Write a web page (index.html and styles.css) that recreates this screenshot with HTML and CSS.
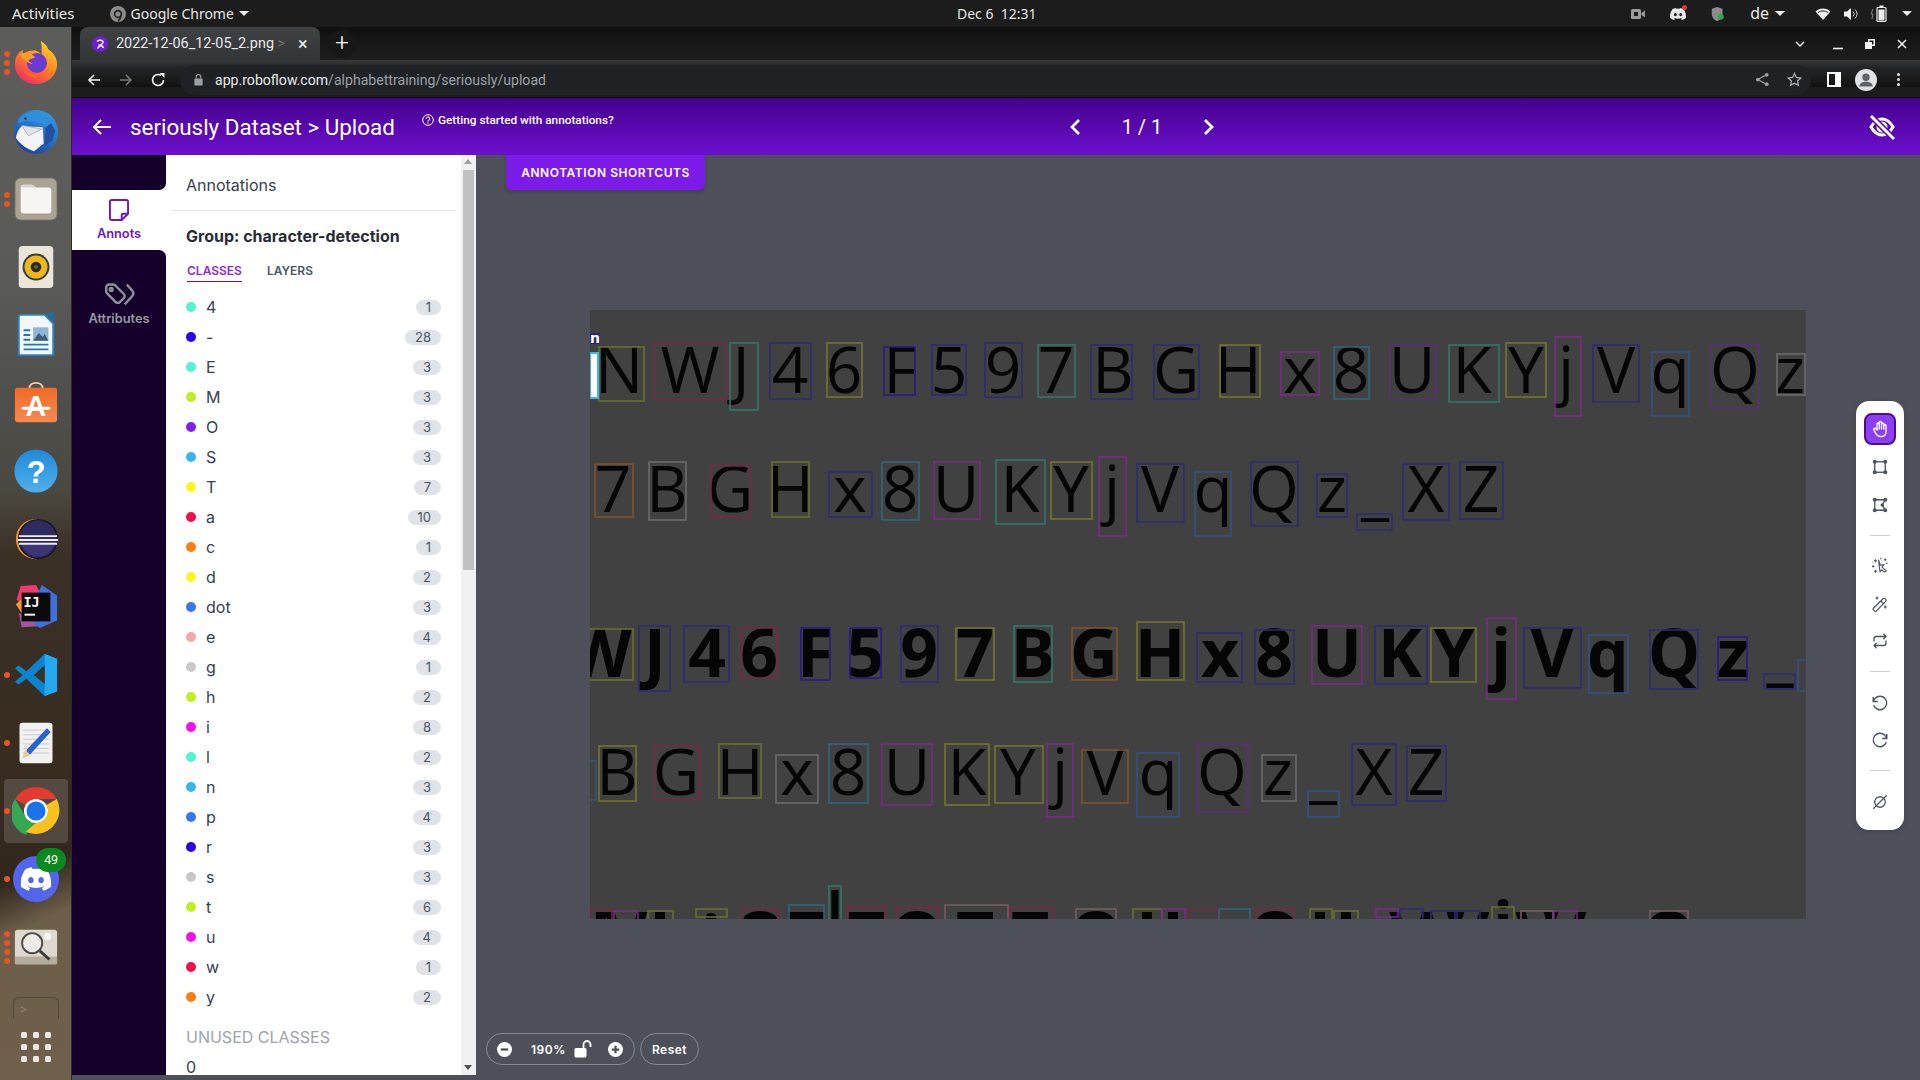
FILE: index.html
```html
<!DOCTYPE html>
<html lang="en">
<head>
<meta charset="utf-8">
<title>seriously Dataset - Upload</title>
<link rel="stylesheet" href="styles.css">
</head>
<body>
<svg class="defs" width="0" height="0" aria-hidden="true">
  <defs>
    <symbol id="discord" viewBox="0 0 24 24"><path d="M20.317 4.37a19.791 19.791 0 0 0-4.885-1.515.074.074 0 0 0-.079.037c-.21.375-.444.864-.608 1.25a18.27 18.27 0 0 0-5.487 0 12.64 12.64 0 0 0-.617-1.25.077.077 0 0 0-.079-.037A19.736 19.736 0 0 0 3.677 4.37a.07.07 0 0 0-.032.027C.533 9.046-.32 13.58.099 18.057a.082.082 0 0 0 .031.057 19.9 19.9 0 0 0 5.993 3.03.078.078 0 0 0 .084-.028c.462-.63.874-1.295 1.226-1.994a.076.076 0 0 0-.041-.106 13.107 13.107 0 0 1-1.872-.892.077.077 0 0 1-.008-.128 10.2 10.2 0 0 0 .372-.292.074.074 0 0 1 .077-.01c3.928 1.793 8.18 1.793 12.062 0a.074.074 0 0 1 .078.01c.12.098.246.198.373.292a.077.077 0 0 1-.006.127 12.299 12.299 0 0 1-1.873.892.077.077 0 0 0-.041.107c.36.698.772 1.362 1.225 1.993a.076.076 0 0 0 .084.028 19.839 19.839 0 0 0 6.002-3.03.077.077 0 0 0 .032-.054c.5-5.177-.838-9.674-3.549-13.66a.061.061 0 0 0-.031-.03zM8.02 15.33c-1.183 0-2.157-1.085-2.157-2.419 0-1.333.956-2.419 2.157-2.419 1.21 0 2.176 1.096 2.157 2.42 0 1.333-.956 2.418-2.157 2.418zm7.975 0c-1.183 0-2.157-1.085-2.157-2.419 0-1.333.955-2.419 2.157-2.419 1.21 0 2.176 1.096 2.157 2.42 0 1.333-.946 2.418-2.157 2.418z"/></symbol>
    <linearGradient id="ffg" x1="0.8" y1="0" x2="0.2" y2="1"><stop offset="0" stop-color="#ffd52e"/><stop offset="0.45" stop-color="#ff8a1e"/><stop offset="1" stop-color="#f0256e"/></linearGradient>
    <linearGradient id="tbg" x1="0.8" y1="0" x2="0.2" y2="1"><stop offset="0" stop-color="#2fa0ea"/><stop offset="1" stop-color="#1e3e9c"/></linearGradient>
    <linearGradient id="swg" x1="0" y1="0" x2="0" y2="1"><stop offset="0" stop-color="#f26a26"/><stop offset="1" stop-color="#f58a50"/></linearGradient>
    <linearGradient id="hlg" x1="0" y1="0" x2="0" y2="1"><stop offset="0" stop-color="#2089da"/><stop offset="1" stop-color="#4fb0ea"/></linearGradient>
  </defs>
</svg>

<header class="gnome-bar">
  <span class="gnome-activities">Activities</span>
  <span class="gnome-app">
    <svg class="gnome-app-icon" viewBox="0 0 16 16"><circle cx="8" cy="8" r="8" fill="#8b8b8b"/><circle cx="8" cy="8" r="3.4" fill="none" stroke="#222" stroke-width="1.6"/><path d="M11 9c0 3-1 4.5-3 6" fill="none" stroke="#222" stroke-width="1.6"/></svg>
    Google Chrome<i class="caret caret-app"></i>
  </span>
  <span class="gnome-clock">Dec 6&nbsp;&nbsp;12:31</span>
  <span class="gnome-tray">
    <svg class="tray tray-cam" viewBox="0 0 16 16"><rect x="1" y="3" width="10" height="10" rx="1.5" fill="#9a9a9a"/><rect x="4" y="6" width="4" height="4" fill="#1c1c1c"/><path d="M11.5 7l3.5-2.5v7L11.5 9z" fill="#9a9a9a"/></svg>
    <span class="tray-discord"><svg class="tray" viewBox="0 0 24 24" fill="#e8e8e8"><use href="#discord"/></svg><i class="tray-red"></i></span>
    <svg class="tray tray-shield" viewBox="0 0 16 18"><path d="M7 1l6 2v6c0 4-3 7-6 8-3-1-6-4-6-8V3z" fill="#8c8c8c"/><circle cx="11" cy="12" r="3.4" fill="#2ea84a"/></svg>
    <span class="tray-lang">de<i class="caret"></i></span>
    <svg class="tray tray-wifi" viewBox="0 0 16 16"><path d="M0.5 5.5C4.5 1.500 11.500 1.500 15.500 5.500L8 14z" fill="#f0f0f0"/><path d="M3 6.500C6 4.500 10 4.500 13 6.500" stroke="#1c1c1c" stroke-width="1" fill="none"/></svg>
    <svg class="tray tray-vol" viewBox="0 0 16 16"><path d="M1 5.500h3L8 2v12L4 10.500H1z" fill="#f0f0f0"/><path d="M10 5.500a3.500 3.500 0 0 1 0 5M12 3.500a6 6 0 0 1 0 9" stroke="#c8c8c8" fill="none"/></svg>
    <svg class="tray tray-bat" viewBox="0 0 20 18"><path d="M3 4L1 9h2l-1 5" stroke="#888" fill="none"/><rect x="7" y="2.500" width="9" height="14" rx="1" fill="none" stroke="#f0f0f0" stroke-width="1.200"/><rect x="8.500" y="4.500" width="6" height="11" fill="#f0f0f0"/><rect x="9.500" y="0.500" width="4" height="2" fill="#f0f0f0"/></svg>
    <i class="caret caret-end"></i>
  </span>
</header>

<div class="desktop">
  <nav class="dock">
    <div class="dock-item">
      <span class="run-dots"><i></i><i></i><i></i></span>
      <svg class="dock-icon" viewBox="0 0 48 48"><path d="M29 1c5 3 7 6 8 9 5 3 9 9 9 15 0 12-10 21-22 21S2 37 2 25c0-4 1-8 3-10 2-3 3-3 6-5-1 2-1 3 0 4 3-2 7-3 10-3 5 0 6 2 9 4 0-6 0-10-1-14z" fill="url(#ffg)"/><circle cx="25" cy="24" r="10.500" fill="#6a3bd0"/><path d="M7 15c5-2 13-2 16 3-2 2-5 1-7 3 1 2 5 4 5 4-5 0-10-5-14-10z" fill="#ff9f24"/><path d="M25 36c8 0 13-5 13-13 0 9-5 16-14 16-7 0-12-4-14-9 3 4 9 6 15 6z" fill="#ff6a1f"/></svg>
    </div>
    <div class="dock-item">
      <svg class="dock-icon" viewBox="0 0 48 48"><circle cx="24" cy="25" r="23" fill="url(#tbg)"/><path d="M9 19L31 20 32 37 22 45C14 43 7 37 3 31 4 26 6 22 9 19z" fill="#f4f4f6"/><path d="M9 18L30 22 16 29z" fill="#e4e4e8" stroke="#9a9aa4" stroke-width="0.700"/><path d="M5 16c2-9 14-15 24-11 7 3 10 10 8 17L27 15 14 13z" fill="#2f8fdc"/><path d="M34 20l-1 20 8-6 3-10-4-8z" fill="#24509f"/><circle cx="13" cy="11" r="1.200" fill="#222"/></svg>
    </div>
    <div class="dock-item">
      <span class="run-dots"><i></i><i></i></span>
      <svg class="dock-icon" viewBox="0 0 48 48"><rect x="2" y="2" width="44" height="44" rx="6" fill="#a8a392" stroke="#6f6c60"/><path d="M8 12a3 3 0 0 1 3-3h9l4 3h13a3 3 0 0 1 3 3v21a3 3 0 0 1-3 3H11a3 3 0 0 1-3-3z" fill="#f6f5f2"/><path d="M8 12a3 3 0 0 1 3-3h9l4 3z" fill="#d9d6cc"/></svg>
    </div>
    <div class="dock-item">
      <svg class="dock-icon" viewBox="0 0 48 48"><rect x="6" y="2" width="36" height="44" rx="4" fill="#ebe6dc"/><circle cx="24" cy="24" r="14" fill="#3a3a3a"/><circle cx="24" cy="24" r="12" fill="#eeb81c"/><circle cx="24" cy="24" r="5.500" fill="#2a2a2a"/><circle cx="24" cy="24" r="2.200" fill="#5a5a5a"/></svg>
    </div>
    <div class="dock-item">
      <svg class="dock-icon" viewBox="0 0 48 48"><path d="M8 3h25l9 9v31a2 2 0 0 1-2 2H8a2 2 0 0 1-2-2V5a2 2 0 0 1 2-2z" fill="#f2f7fb" stroke="#2a83c0" stroke-width="2"/><path d="M34 1h9v9z" fill="#1d6ea6"/><path d="M11 18h7v2h-7zM11 23h7v2h-7zM11 28h7v2h-7zM11 33h26v2H11zM11 38h26v2H11z" fill="#2276b4"/><rect x="21" y="16" width="16" height="14" fill="#8bb6d6"/><path d="M21 30l6-8 4 4 2-3 4 7z" fill="#3d5f7c"/></svg>
    </div>
    <div class="dock-item">
      <svg class="dock-icon" viewBox="0 0 48 48"><path d="M17 9c0-8 14-8 14 0" fill="none" stroke="#e8d8bc" stroke-width="2"/><rect x="2" y="8" width="44" height="36" rx="3" fill="url(#swg)"/><text class="icon-a" x="24" y="38">A</text><rect x="9" y="28" width="30" height="3" rx="1.500" fill="#fff"/></svg>
    </div>
    <div class="dock-item">
      <svg class="dock-icon" viewBox="0 0 48 48"><circle cx="24" cy="24" r="22.500" fill="url(#hlg)"/><text class="icon-q" x="24" y="37">?</text></svg>
    </div>
    <div class="dock-item">
      <svg class="dock-icon" viewBox="0 0 48 48"><circle cx="24" cy="24" r="21" fill="#f39b1c"/><circle cx="26" cy="24" r="21" fill="#14122c"/><circle cx="26" cy="24" r="19.500" fill="#2f2a60"/><path d="M9 30a18 18 0 0 0 34 0z" fill="#3d3575"/><path d="M6 20h40v2H6zM5 24h42v2H5zM6 28h40v2H6z" fill="#f0eef5"/></svg>
    </div>
    <div class="dock-item">
      <svg class="dock-icon" viewBox="0 0 48 48"><path d="M4 16L8 2 24 1 30 12 10 25z" fill="#f0396f"/><path d="M3 21L10 15 10 32z" fill="#f29a2e"/><path d="M9 45L6 30 22 38 26 44z" fill="#a3559f"/><path d="M30 1L46 12V38L28 46 18 38 26 10z" fill="#3f70e0"/><rect x="9" y="9" width="30" height="30" fill="#0b0b0b"/><text class="icon-ij" x="11" y="24">IJ</text><rect x="12" y="31" width="11" height="2" fill="#fff"/></svg>
    </div>
    <div class="dock-item">
      <span class="run-dots"><i></i></span>
      <svg class="dock-icon" viewBox="0 0 48 48"><path d="M33 2L46 7V41L33 46 14 28 6 34 2 31 10 24 2 17 6 14 14 20zM33 14L22 24 33 33z" fill="#0a84cf"/><path d="M33 2L46 7V41L33 46z" fill="#23a9f2"/><path d="M33 14L22 24 33 33z" fill="#3a3024"/></svg>
    </div>
    <div class="dock-item">
      <span class="run-dots"><i></i></span>
      <svg class="dock-icon icon-editor" viewBox="0 0 48 48"><rect x="6" y="2" width="36" height="44" rx="3" fill="#f1f1f1"/><path d="M10 10h28M10 15h28M10 20h28M10 25h28M10 30h28M10 35h28" stroke="#c8c8c8"/><path d="M36 8l4 4-22 24-6 2 2-7z" fill="#2463d0"/><path d="M12 31l-3 10 9-4z" fill="#e9c9a0"/></svg>
    </div>
    <div class="dock-item dock-active">
      <span class="run-dots"><i></i></span>
      <svg class="dock-icon" viewBox="0 0 48 48"><path d="M24 0a24 24 0 0 1 20.800 12H24a12 12 0 0 0-10.400 6L3.200 12A24 24 0 0 1 24 0z" fill="#e53a2f"/><path d="M3.200 12l10.400 18A12 12 0 0 0 24 36L13.600 48A24 24 0 0 1 3.200 12z" fill="#34a853"/><path d="M44.800 12A24 24 0 0 1 13.600 44.800L24 36a12 12 0 0 0 10.400-18z" fill="#fbc21b"/><circle cx="24" cy="24" r="12" fill="#fff"/><circle cx="24" cy="24" r="9.500" fill="#1a73e8"/></svg>
    </div>
    <div class="dock-item">
      <span class="run-dots"><i></i></span>
      <svg class="dock-icon" viewBox="0 0 48 48"><circle cx="24" cy="24" r="24" fill="#5266ec"/><use href="#discord" x="8" y="8" width="32" height="32" fill="#fff"/></svg>
      <span class="dock-badge">49</span>
    </div>
    <div class="dock-item">
      <span class="run-dots"><i></i><i></i><i></i><i></i></span>
      <svg class="dock-icon" viewBox="0 -2 48 48"><rect x="2" y="4" width="44" height="36" rx="3" fill="#ddd9ce"/><rect x="2" y="32" width="44" height="8" fill="#b3ad9c"/><circle cx="36" cy="11" r="4" fill="#f6f5f2"/><circle cx="20" cy="18" r="10.500" fill="#eeece7" stroke="#4a4a4a" stroke-width="2"/><path d="M28 26l10 9" stroke="#3a3a3a" stroke-width="3"/></svg>
    </div>
    <div class="dock-trash"><span>&gt;</span></div>
    <div class="dock-grid"><i></i><i></i><i></i><i></i><i></i><i></i><i></i><i></i><i></i></div>
  </nav>

  <main class="browser">
    <div class="tabstrip">
      <div class="tab">
        <svg class="favicon" viewBox="0 0 16 16"><circle cx="8" cy="8" r="8" fill="#6a1fd0"/><path d="M5 5.500c2-2 6-1.500 6 1 0 2-4 3-5.500 6M6.500 9c2 0 4 .5 5 3" fill="none" stroke="#fff" stroke-width="1.400"/></svg>
        <span class="tab-title">2022-12-06_12-05_2.png <em>&gt;</em></span>
        <span class="tab-close">×</span>
      </div>
      <span class="tab-new">+</span>
      <span class="strip-spacer"></span>
      <span class="win-chevron"><svg viewBox="0 0 12 12"><path d="M2 4l4 4 4-4" fill="none" stroke="#e8e8e8" stroke-width="1.500"/></svg></span>
      <span class="win-btn"><svg viewBox="0 0 12 12"><path d="M1 10.500h10" stroke="#f0f0f0" stroke-width="1.600"/></svg></span>
      <span class="win-btn"><svg viewBox="0 0 12 12"><path d="M4 1h7v7h-3v3H1V4h3zM5.500 2.500v1.500H8v2.500h1.500v-4z" fill="#f0f0f0" fill-rule="evenodd"/></svg></span>
      <span class="win-btn"><svg viewBox="0 0 12 12"><path d="M2 2l8 8M10 2l-8 8" stroke="#f0f0f0" stroke-width="1.600"/></svg></span>
    </div>
    <div class="toolbar">
      <svg class="nav-icon" viewBox="0 0 16 16"><path d="M14 8H3M8 3L3 8l5 5" fill="none" stroke="#f0f0f0" stroke-width="1.600"/></svg>
      <svg class="nav-icon" viewBox="0 0 16 16"><path d="M2 8h11M8 3l5 5-5 5" fill="none" stroke="#777" stroke-width="1.600"/></svg>
      <svg class="nav-icon" viewBox="0 0 16 16"><path d="M13.500 8A5.500 5.500 0 1 1 11 3.400" fill="none" stroke="#f0f0f0" stroke-width="1.700"/><path d="M9.500 1h5v5z" fill="#f0f0f0"/></svg>
      <div class="omnibox">
        <svg class="lock" viewBox="0 0 12 14"><rect x="1.500" y="6" width="9" height="7.500" rx="1" fill="#9aa0a6"/><path d="M3.500 6V4a2.500 2.500 0 0 1 5 0v2" fill="none" stroke="#9aa0a6" stroke-width="1.200"/></svg>
        <span class="url"><b>app.roboflow.com</b>/alphabettraining/seriously/upload</span>
        <svg class="omni-icon" viewBox="0 0 16 16"><circle cx="12.500" cy="3" r="2" fill="#9aa0a6"/><circle cx="12.500" cy="13" r="2" fill="#9aa0a6"/><circle cx="3" cy="8" r="2" fill="#9aa0a6"/><path d="M12 3L3 8l9 5" fill="none" stroke="#9aa0a6" stroke-width="1.200"/></svg>
        <svg class="omni-icon" viewBox="0 0 16 16"><path d="M8 1.500l2 4.300 4.700.6-3.400 3.200.9 4.700L8 12l-4.200 2.300.9-4.700L1.300 6.400 6 5.800z" fill="none" stroke="#aeb2b6" stroke-width="1.300"/></svg>
      </div>
      <span class="side-icon"></span>
      <svg class="avatar" viewBox="0 0 24 24"><circle cx="12" cy="12" r="12" fill="#dfe1e5"/><circle cx="12" cy="9" r="4" fill="#5f6368"/><path d="M4.500 19c1-4 4-5 7.500-5s6.500 1 7.500 5z" fill="#5f6368"/></svg>
      <span class="kebab"><i></i><i></i><i></i></span>
    </div>

    <div class="app">
      <div class="app-head">
        <svg class="head-back" viewBox="0 0 20 20"><path d="M19 10H2M9 3l-7 7 7 7" fill="none" stroke="#fff" stroke-width="2"/></svg>
        <h1 class="head-title">seriously Dataset &gt; Upload</h1>
        <span class="head-help">
          <svg class="help-icon" viewBox="0 0 12 12"><circle cx="6" cy="6" r="5.300" fill="none" stroke="#fff"/><path d="M4.200 4.700A1.800 1.800 0 1 1 6 6.500v1" fill="none" stroke="#fff"/><circle cx="6" cy="9" r=".7" fill="#fff"/></svg>
          Getting started with annotations?
        </span>
        <div class="pager">
          <svg class="pager-arrow" viewBox="0 0 12 18"><path d="M10 2L3 9l7 7" fill="none" stroke="#fff" stroke-width="2.700"/></svg>
          <span class="pager-text">1 / 1</span>
          <svg class="pager-arrow" viewBox="0 0 12 18"><path d="M2 2l7 7-7 7" fill="none" stroke="#fff" stroke-width="2.700"/></svg>
        </div>
        <svg class="head-eye" viewBox="0 0 26 26"><path d="M2 13c4-7 8-8 11-8s7 1 11 8c-4 7-8 8-11 8s-7-1-11-8z" fill="none" stroke="#fff" stroke-width="3"/><circle cx="13" cy="13" r="4" fill="none" stroke="#fff" stroke-width="3"/><path d="M2 2l22 22" stroke="#5a0aaf" stroke-width="6"/><path d="M2 2l23 23" stroke="#fff" stroke-width="2.800"/></svg>
      </div>

      <div class="app-body">
        <aside class="rail">
          <div class="rail-top"></div>
          <div class="rail-tab rail-tab-active">
            <svg class="rail-icon" viewBox="0 0 22 26"><path d="M14 24H3a2 2 0 0 1-2-2V4a2 2 0 0 1 2-2h16a2 2 0 0 1 2 2v13z" fill="none" stroke="#6b16c8" stroke-width="2.200"/><path d="M14 24v-5a2 2 0 0 1 2-2h5" fill="none" stroke="#6b16c8" stroke-width="2.200"/></svg>
            <span>Annots</span>
          </div>
          <div class="rail-rest">
            <div class="rail-tab">
              <svg class="rail-icon rail-icon-tags" viewBox="0 0 24 24" fill="none" stroke="#8f8f98" stroke-width="1.700"><path d="M7.859 6h-2.834a2.025 2.025 0 0 0-2.025 2.025v2.834c0 .537.213 1.052.593 1.432l6.116 6.116a2.025 2.025 0 0 0 2.864 0l2.834-2.834a2.025 2.025 0 0 0 0-2.864l-6.117-6.116a2.025 2.025 0 0 0-1.431-.593z"/><path d="M17.500 6l4 4.500a3 3 0 0 1 0 3.500L16 20"/><circle cx="6.500" cy="9.500" r="1"/></svg>
              <span>Attributes</span>
            </div>
          </div>
        </aside>

        <section class="panel">
          <div class="panel-scroll">
            <div class="panel-title">Annotations</div>
            <h2 class="group-title">Group: character-detection</h2>
            <div class="tabs"><span class="tabs-item tabs-on">CLASSES</span><span class="tabs-item">LAYERS</span></div>
            <ul class="classes">
              <li><i class="dot teal"></i><span class="name">4</span><span class="count">1</span></li>
              <li><i class="dot blue"></i><span class="name">-</span><span class="count">28</span></li>
              <li><i class="dot teal"></i><span class="name">E</span><span class="count">3</span></li>
              <li><i class="dot lime"></i><span class="name">M</span><span class="count">3</span></li>
              <li><i class="dot purple"></i><span class="name">O</span><span class="count">3</span></li>
              <li><i class="dot sky"></i><span class="name">S</span><span class="count">3</span></li>
              <li><i class="dot yellow"></i><span class="name">T</span><span class="count">7</span></li>
              <li><i class="dot crimson"></i><span class="name">a</span><span class="count">10</span></li>
              <li><i class="dot orange"></i><span class="name">c</span><span class="count">1</span></li>
              <li><i class="dot yellow"></i><span class="name">d</span><span class="count">2</span></li>
              <li><i class="dot azure"></i><span class="name">dot</span><span class="count">3</span></li>
              <li><i class="dot pink"></i><span class="name">e</span><span class="count">4</span></li>
              <li><i class="dot grey"></i><span class="name">g</span><span class="count">1</span></li>
              <li><i class="dot lime"></i><span class="name">h</span><span class="count">2</span></li>
              <li><i class="dot magenta"></i><span class="name">i</span><span class="count">8</span></li>
              <li><i class="dot teal"></i><span class="name">l</span><span class="count">2</span></li>
              <li><i class="dot sky"></i><span class="name">n</span><span class="count">3</span></li>
              <li><i class="dot azure"></i><span class="name">p</span><span class="count">4</span></li>
              <li><i class="dot blue"></i><span class="name">r</span><span class="count">3</span></li>
              <li><i class="dot grey"></i><span class="name">s</span><span class="count">3</span></li>
              <li><i class="dot lime"></i><span class="name">t</span><span class="count">6</span></li>
              <li><i class="dot magenta"></i><span class="name">u</span><span class="count">4</span></li>
              <li><i class="dot crimson"></i><span class="name">w</span><span class="count">1</span></li>
              <li><i class="dot orange"></i><span class="name">y</span><span class="count">2</span></li>
            </ul>
            <div class="unused">UNUSED CLASSES</div>
            <div class="unused-item">0</div>
          </div>
          <div class="scrollbar">
            <i class="sb-up"></i>
            <i class="sb-thumb"></i>
            <i class="sb-down"></i>
          </div>
        </section>

        <div class="canvas">
          <button class="shortcuts">ANNOTATION SHORTCUTS</button>

          <svg class="photo" viewBox="590 310 1216 609" width="1216" height="609">
            <g class="glyphs">
              <text x="619" y="392.500">N</text><text x="690" y="392.500">W</text><text x="741" y="392.500">J</text><text x="790" y="392.500">4</text><text x="844" y="392.500">6</text><text x="900" y="392.500">F</text><text x="949" y="392.500">5</text><text x="1003" y="392.500">9</text><text x="1056" y="392.500">7</text><text x="1113" y="392.500">B</text><text x="1176" y="392.500">G</text><text x="1238" y="392.500">H</text><text x="1300" y="392.500">x</text><text x="1351" y="392.500">8</text><text x="1412" y="392.500">U</text><text x="1472" y="392.500">K</text><text x="1526" y="392.500">Y</text><text x="1566" y="392.500">j</text><text x="1616" y="392.500">V</text><text x="1670" y="392.500">q</text><text x="1735" y="392.500">Q</text><text x="1790" y="392.500">z</text>
              <text x="613" y="512.300">7</text><text x="667" y="512.300">B</text><text x="730" y="512.300">G</text><text x="790" y="512.300">H</text><text x="850" y="512.300">x</text><text x="900" y="512.300">8</text><text x="956" y="512.300">U</text><text x="1020" y="512.300">K</text><text x="1071" y="512.300">Y</text><text x="1112" y="512.300">j</text><text x="1160" y="512.300">V</text><text x="1213" y="512.300">q</text><text x="1274" y="512.300">Q</text><text x="1332" y="512.300">z</text><text x="1375" y="512.300">_</text><text x="1426" y="512.300">X</text><text x="1481" y="512.300">Z</text>
              <text x="617" y="795">B</text><text x="676" y="795">G</text><text x="740" y="795">H</text><text x="797" y="795">x</text><text x="848" y="795">8</text><text x="907" y="795">U</text><text x="967" y="795">K</text><text x="1018" y="795">Y</text><text x="1060" y="795">j</text><text x="1105" y="795">V</text><text x="1158" y="795">q</text><text x="1222" y="795">Q</text><text x="1278" y="795">z</text><text x="1323" y="795">_</text><text x="1374" y="795">X</text><text x="1426" y="795">Z</text>
            </g>
            <g class="glyphs glyphs-bold">
              <text x="600" y="677">W</text><text x="655" y="677">J</text><text x="707" y="677">4</text><text x="759" y="677">6</text><text x="815" y="677">F</text><text x="865" y="677">5</text><text x="919" y="677">9</text><text x="975" y="677">7</text><text x="1033" y="677">B</text><text x="1094" y="677">G</text><text x="1160" y="677">H</text><text x="1220" y="677">x</text><text x="1274" y="677">8</text><text x="1337" y="677">U</text><text x="1400" y="677">K</text><text x="1454" y="677">Y</text><text x="1501" y="677">j</text><text x="1552" y="677">V</text><text x="1608" y="677">q</text><text x="1674" y="677">Q</text><text x="1733" y="677">z</text><text x="1780" y="677">_</text>
              <text x="601" y="960">I</text><text x="626" y="960">V</text><text x="660" y="960">I</text><text x="711" y="964">j</text><text x="760" y="960">O</text><text x="806" y="960">T</text><text x="835" y="941">|</text><text x="866" y="960">T</text><text x="917" y="960">O</text><text x="975" y="960">T</text><text x="1030" y="960">T</text><text x="1096" y="960">O</text><text x="1147" y="960">I</text><text x="1173" y="960">I</text><text x="1275" y="960">O</text><text x="1320" y="960">I</text><text x="1346" y="960">I</text><text x="1387" y="970">j</text><text x="1411" y="960">V</text><text x="1443" y="960">V</text><text x="1468" y="960">V</text><text x="1503" y="950">j</text><text x="1537" y="960">V</text><text x="1565" y="960">V</text><text x="1669" y="960">O</text>
            </g>
            <g class="boxes">
              <rect class="ol" x="599" y="347" width="45" height="54"/><rect class="cr" x="654" y="343" width="72" height="56"/><rect class="te" x="730" y="343" width="28" height="67"/><rect class="nv" x="770" y="343" width="41" height="56"/><rect class="ye" x="827" y="343" width="35" height="54"/><rect class="in" x="884" y="347" width="31" height="48"/><rect class="nv" x="932" y="345" width="34" height="50"/><rect class="nv" x="985" y="343" width="37" height="54"/><rect class="te" x="1038" y="345" width="37" height="52"/><rect class="nv" x="1091" y="345" width="41" height="54"/><rect class="nv" x="1154" y="345" width="45" height="54"/><rect class="ye" x="1220" y="345" width="40" height="52"/><rect class="pu" x="1281" y="352" width="38" height="43"/><rect class="tb" x="1334" y="347" width="35" height="52"/><rect class="vi" x="1390" y="345" width="46" height="54"/><rect class="te" x="1449" y="345" width="50" height="57"/><rect class="ye" x="1506" y="343" width="40" height="54"/><rect class="pu" x="1555" y="337" width="26" height="79"/><rect class="nv" x="1593" y="345" width="46" height="57"/><rect class="bl" x="1652" y="352" width="37" height="64"/><rect class="vi" x="1711" y="345" width="48" height="63"/><rect class="gy" x="1777" y="354" width="28" height="41"/>
              <rect class="or" x="595" y="464" width="38" height="53"/><rect class="gy" x="649" y="462" width="37" height="58"/><rect class="cr" x="711" y="466" width="39" height="51"/><rect class="ol" x="772" y="462" width="37" height="55"/><rect class="nv" x="829" y="472" width="43" height="45"/><rect class="tb" x="882" y="462" width="37" height="58"/><rect class="pu" x="934" y="462" width="46" height="57"/><rect class="te" x="996" y="460" width="49" height="64"/><rect class="ye" x="1051" y="462" width="41" height="57"/><rect class="pu" x="1099" y="457" width="27" height="79"/><rect class="nv" x="1137" y="464" width="47" height="58"/><rect class="bl" x="1195" y="472" width="36" height="64"/><rect class="nv" x="1251" y="462" width="47" height="64"/><rect class="nv" x="1317" y="474" width="30" height="43"/><rect class="nv" x="1357" y="514" width="35" height="16"/><rect class="nv" x="1403" y="464" width="46" height="56"/><rect class="nv" x="1460" y="462" width="43" height="57"/>
              <rect class="ol" x="589" y="629" width="44" height="51"/><rect class="nv" x="639" y="626" width="31" height="65"/><rect class="nv" x="684" y="626" width="45" height="56"/><rect class="cr" x="741" y="628" width="36" height="50"/><rect class="in" x="801" y="628" width="29" height="52"/><rect class="in" x="850" y="628" width="31" height="50"/><rect class="nv" x="901" y="626" width="37" height="56"/><rect class="ye" x="956" y="628" width="38" height="52"/><rect class="te" x="1014" y="626" width="38" height="56"/><rect class="or" x="1072" y="628" width="45" height="52"/><rect class="ye" x="1137" y="622" width="47" height="58"/><rect class="nv" x="1197" y="633" width="45" height="49"/><rect class="nv" x="1255" y="630" width="39" height="54"/><rect class="pu" x="1312" y="626" width="50" height="58"/><rect class="nv" x="1375" y="626" width="52" height="58"/><rect class="ye" x="1431" y="628" width="45" height="54"/><rect class="pu" x="1487" y="618" width="29" height="81"/><rect class="nv" x="1524" y="628" width="57" height="60"/><rect class="bl" x="1589" y="635" width="39" height="58"/><rect class="nv" x="1650" y="630" width="48" height="59"/><rect class="in" x="1718" y="637" width="29" height="43"/><rect class="nv" x="1764" y="674" width="31" height="15"/><rect class="bl" x="1798" y="660" width="10" height="31"/>
              <rect class="bl" x="589" y="761" width="7" height="39"/><rect class="ye" x="599" y="746" width="37" height="55"/><rect class="cr" x="654" y="746" width="45" height="53"/><rect class="ol" x="719" y="744" width="42" height="54"/><rect class="gy" x="776" y="755" width="42" height="48"/><rect class="tb" x="829" y="744" width="39" height="59"/><rect class="pu" x="882" y="744" width="50" height="61"/><rect class="ye" x="945" y="744" width="44" height="61"/><rect class="ye" x="995" y="746" width="48" height="57"/><rect class="pu" x="1047" y="744" width="26" height="73"/><rect class="or" x="1082" y="750" width="46" height="53"/><rect class="bl" x="1137" y="753" width="42" height="64"/><rect class="vi" x="1197" y="744" width="51" height="68"/><rect class="gy" x="1262" y="755" width="34" height="46"/><rect class="bl" x="1308" y="791" width="31" height="26"/><rect class="nv" x="1352" y="744" width="44" height="61"/><rect class="nv" x="1407" y="746" width="39" height="55"/>
              <rect class="cr" x="590" y="909" width="22" height="16"/><rect class="pu" x="614" y="911" width="24" height="14"/><rect class="ol" x="648" y="911" width="25" height="14"/><rect class="ol" x="696" y="909" width="31" height="8"/><rect class="cr" x="743" y="909" width="35" height="16"/><rect class="tb" x="789" y="905" width="35" height="20"/><rect class="te" x="829" y="886" width="12" height="39"/><rect class="cr" x="848" y="907" width="37" height="18"/><rect class="cr" x="898" y="907" width="40" height="18"/><rect class="br" x="945" y="905" width="63" height="20"/><rect class="cr" x="1010" y="907" width="43" height="18"/><rect class="br" x="1076" y="909" width="40" height="16"/><rect class="ol" x="1133" y="909" width="29" height="16"/><rect class="pu" x="1162" y="909" width="23" height="16"/><rect class="cr" x="1188" y="909" width="30" height="16"/><rect class="tb" x="1219" y="909" width="31" height="16"/><rect class="cr" x="1257" y="909" width="37" height="16"/><rect class="ol" x="1310" y="909" width="22" height="16"/><rect class="ol" x="1334" y="911" width="24" height="14"/><rect class="pu" x="1376" y="909" width="22" height="8"/><rect class="nv" x="1400" y="909" width="23" height="16"/><rect class="nv" x="1431" y="911" width="24" height="14"/><rect class="nv" x="1457" y="911" width="23" height="14"/><rect class="ol" x="1492" y="907" width="22" height="18"/><rect class="br" x="1521" y="911" width="32" height="14"/><rect class="pu" x="1554" y="911" width="23" height="14"/><rect class="br" x="1650" y="911" width="38" height="14"/>
            </g>
            <rect class="selected" x="590" y="353" width="8" height="45"/>
            <rect class="selected-tag" x="590" y="333" width="10" height="11"/>
            <text class="selected-label" x="595" y="343">n</text>
          </svg>

          <div class="zoombar">
            <div class="zoom-pill">
              <svg class="zoom-round" viewBox="0 0 16 16"><circle cx="8" cy="8" r="8" fill="#fff"/><rect x="4" y="6.800" width="8" height="2.400" fill="#4e5059"/></svg>
              <span class="zoom-val">190%</span>
              <svg class="zoom-lock" viewBox="0 0 18 18"><rect x="0.500" y="8" width="12" height="9.500" rx="1.500" fill="#fff"/><path d="M9.500 8V4.500a3.500 3.500 0 0 1 7 0V7" fill="none" stroke="#fff" stroke-width="1.800"/></svg>
              <svg class="zoom-round" viewBox="0 0 16 16"><circle cx="8" cy="8" r="8" fill="#fff"/><path d="M4 6.800h2.800V4h2.400v2.800H12v2.400H9.200V12H6.800V9.200H4z" fill="#4e5059"/></svg>
            </div>
            <div class="zoom-reset">Reset</div>
          </div>

          <div class="tools">
            <div class="tool tool-on"><span><svg viewBox="0 0 24 24" fill="none" stroke="#fff" stroke-width="1.800" stroke-linecap="round" stroke-linejoin="round"><path d="M8 13V5.500a1.500 1.500 0 0 1 3 0V12"/><path d="M11 5.500v-2a1.500 1.500 0 1 1 3 0V12"/><path d="M14 5.500a1.500 1.500 0 0 1 3 0V12"/><path d="M17 7.500a1.500 1.500 0 0 1 3 0V16a6 6 0 0 1-6 6h-2 .208a6 6 0 0 1-5.012-2.700l-.196-.3c-.312-.479-1.407-2.388-3.286-5.728a1.500 1.500 0 0 1 .536-2.022 1.867 1.867 0 0 1 2.280.28L8 13"/></svg></span></div>
            <div class="tool"><svg viewBox="0 0 24 24" fill="none" stroke="#4b5563" stroke-width="1.800"><rect x="5" y="5" width="14" height="14"/><circle cx="5" cy="5" r="1.800" fill="#4b5563"/><circle cx="19" cy="5" r="1.800" fill="#4b5563"/><circle cx="5" cy="19" r="1.800" fill="#4b5563"/><circle cx="19" cy="19" r="1.800" fill="#4b5563"/></svg></div>
            <div class="tool"><svg viewBox="0 0 24 24" fill="none" stroke="#4b5563" stroke-width="1.800"><path d="M5 5h14l-4 7 4 7H5z"/><circle cx="5" cy="5" r="1.800" fill="#4b5563"/><circle cx="19" cy="5" r="1.800" fill="#4b5563"/><circle cx="5" cy="19" r="1.800" fill="#4b5563"/><circle cx="19" cy="19" r="1.800" fill="#4b5563"/><circle cx="15" cy="12" r="1.400" fill="#4b5563"/></svg></div>
            <hr class="tool-sep">
            <div class="tool"><svg viewBox="0 0 24 24" fill="none" stroke="#4b5563" stroke-width="1.500" stroke-linejoin="round"><path d="M10 4l2.500 7 5-1-3 3.500 6 5-2.500 1.500-4-3-2 3z"/><path d="M6 3v4M4 5h4M3 11v3M1.500 12.500h3M6 17v4M4 19h4M19 2v3M17.500 3.500h3M20 8.500h2M13 1v2M2 7h1"/></svg></div>
            <div class="tool"><svg viewBox="0 0 24 24" fill="none" stroke="#4b5563" stroke-width="1.600" stroke-linejoin="round"><path d="M3 18L16 5a2 2 0 0 1 3 0l.5.500a2 2 0 0 1 0 3L7 21.500a1.500 1.500 0 0 1-2 0L3 19.500a1 1 0 0 1 0-1.500z"/><path d="M13 8l3.500 3.500"/><path d="M8 2v4M6 4h4M19 14v4M17 16h4"/></svg></div>
            <div class="tool"><svg viewBox="0 0 24 24" fill="none" stroke="#4b5563" stroke-width="1.800" stroke-linecap="round" stroke-linejoin="round"><path d="M4 12V9a3 3 0 0 1 3-3h13m-3-3 3 3-3 3"/><path d="M20 12v3a3 3 0 0 1-3 3H4m3 3-3-3 3-3"/></svg></div>
            <hr class="tool-sep">
            <div class="tool"><svg viewBox="0 0 24 24" fill="none" stroke="#4b5563" stroke-width="1.900"><path d="M3 4v6h6"/><path d="M3.500 15a9 9 0 1 0 2.100-9.400L3 10"/></svg></div>
            <div class="tool"><svg viewBox="0 0 24 24" fill="none" stroke="#4b5563" stroke-width="1.900"><path d="M21 4v6h-6"/><path d="M20.500 15a9 9 0 1 1-2.100-9.400L21 10"/></svg></div>
            <hr class="tool-sep">
            <div class="tool"><svg viewBox="0 0 24 24" fill="none" stroke="#4b5563" stroke-width="1.700"><circle cx="12" cy="12" r="7"/><path d="M3 21L21 3"/></svg></div>
          </div>
        </div>
      </div>
    </div>
  </main>
</div>
</body>
</html>
```
FILE: styles.css
```css
* { box-sizing: border-box; }
html, body { margin: 0; padding: 0; }
body {
  width: 1920px;
  height: 1080px;
  overflow: hidden;
  background: #222;
  font-family: "Inter", "Noto Sans", sans-serif;
  color: #fff;
}
.defs { position: absolute; }

/* gnome top bar */
.gnome-bar {
  height: 27px;
  background: #1c1c1c;
  display: flex;
  align-items: center;
  position: relative;
  font: 14px/27px "Noto Sans", sans-serif;
  color: #e8e8e8;
}
.gnome-activities { margin-left: 12px; font-size: 15px; }
.gnome-app { margin-left: 35px; display: flex; align-items: center; gap: 5px; }
.gnome-app-icon { width: 16px; height: 16px; }
.caret {
  display: inline-block;
  width: 0;
  height: 0;
  margin-left: 6px;
  border: 5px solid transparent;
  border-top: 5px solid #eee;
  border-bottom: 0;
}
.caret-app { margin-left: 0; }
.gnome-clock { position: absolute; left: 957px; top: 0; }
.gnome-tray { margin-left: auto; display: flex; align-items: center; padding-right: 8px; }
.tray { width: 16px; height: 16px; display: block; }
.tray-cam { margin-right: 24px; }
.tray-discord { position: relative; margin-right: 24px; }
.tray-red { position: absolute; right: -1px; top: -1px; width: 5px; height: 5px; border-radius: 50%; background: #e33; }
.tray-shield { margin-right: 24px; }
.tray-lang { margin-right: 30px; display: flex; align-items: center; font-size: 16px; }
.tray-wifi { margin-right: 12px; }
.tray-vol { margin-right: 11px; }
.tray-bat { width: 20px; height: 18px; margin-right: 4px; }
.caret-end { margin-left: 8px; }

.desktop { display: flex; height: 1053px; }

/* dock */
.dock {
  width: 72px;
  flex: none;
  display: flex;
  flex-direction: column;
  padding-top: 2px;
  background:
    linear-gradient(155deg, transparent 0 79%, rgba(120,104,82,.85) 84% 100%),
    linear-gradient(180deg, #5c5d5b 0, #5a5b59 24%, #4e4f4c 36%, #4b4840 44%, #3a3026 50%, #382c20 70%, #2e251c 84%, #3c3226 100%);
  border-right: 1px solid #2a2a2a;
}
.dock-item { height: 68px; flex: none; display: flex; align-items: center; justify-content: center; position: relative; }
.dock-icon { width: 46px; height: 46px; display: block; }
.icon-editor { width: 44px; height: 44px; }
.dock-active::before {
  content: "";
  position: absolute;
  left: 4px;
  top: 2px;
  width: 64px;
  height: 64px;
  border-radius: 4px;
  background: rgba(255,255,255,.15);
}
.dock-active .dock-icon { position: relative; width: 48px; height: 48px; }
.run-dots {
  position: absolute;
  left: 4px;
  top: 0;
  bottom: 0;
  display: flex;
  flex-direction: column;
  justify-content: center;
  gap: 3px;
}
.run-dots i { width: 6px; height: 6px; border-radius: 50%; background: #e95420; display: block; }
.dock-badge {
  position: absolute;
  left: 36px;
  top: 3px;
  width: 30px;
  height: 24px;
  border-radius: 12px;
  background: #0a8a1e;
  font: 12px/24px "Noto Sans", sans-serif;
  text-align: center;
  color: #fff;
}
.dock-trash {
  width: 46px;
  height: 22px;
  margin: 16px 0 0 13px;
  border: 1px solid #4c4a44;
  border-bottom: 0;
  border-radius: 6px 6px 0 0;
  font: 12px/24px "Noto Sans", sans-serif;
  color: #8f8a80;
  padding-left: 6px;
  flex: none;
}
.dock-grid {
  width: 32px;
  margin: 13px 0 0 21px;
  display: grid;
  grid-template-columns: repeat(3, 6px);
  gap: 6px;
}
.dock-grid i { height: 6px; border-radius: 1.5px; background: #ece9e4; display: block; }
.icon-a { font: 700 30px "Liberation Sans", sans-serif; fill: #fff; text-anchor: middle; }
.icon-q { font: 700 32px "Liberation Sans", sans-serif; fill: #fff; text-anchor: middle; }
.icon-ij { font: 700 14px "DejaVu Sans Mono", monospace; fill: #fff; }

/* browser chrome */
.browser { flex: 1; display: flex; flex-direction: column; min-width: 0; }
.tabstrip {
  height: 33px;
  flex: none;
  display: flex;
  align-items: flex-end;
  padding-left: 8px;
  background: linear-gradient(180deg, #101010, #1e1e1e);
}
.tab {
  width: 240px;
  height: 33px;
  display: flex;
  align-items: center;
  padding-left: 12px;
  border-radius: 8px 8px 0 0;
  background: linear-gradient(180deg, #414244, #333436);
  font: 14.400px "Roboto", sans-serif;
  color: #e8eaed;
}
.favicon { width: 16px; height: 16px; flex: none; margin-right: 8px; }
.tab-title { width: 179px; white-space: nowrap; overflow: hidden; }
.tab-title em { font-style: normal; opacity: .3; }
.tab-close { font-size: 18px; line-height: 1; margin-left: 3px; }
.tab-new {
  width: 28px;
  height: 28px;
  margin: 0 0 2px 8px;
  border-radius: 50%;
  background: #171717;
  text-align: center;
  font: 300 24px/26px "Roboto", sans-serif;
  color: #fff;
}
.strip-spacer { flex: 1; }
.win-chevron, .win-btn { display: flex; align-items: center; justify-content: center; height: 33px; }
.win-chevron { width: 28px; margin-right: 18px; }
.win-chevron svg { width: 12px; height: 12px; }
.win-btn { width: 12px; margin-right: 20px; }
.win-btn svg { width: 12px; height: 12px; flex: none; }
.win-btn:last-child { margin-right: 12px; }

.toolbar {
  height: 38px;
  flex: none;
  display: flex;
  align-items: center;
  padding: 2px 0 0 14px;
  border-bottom: 1px solid #111;
  background: linear-gradient(180deg, #38393b 0, #242526 20%, #121212 72%, #1b1b1c 74%, #1b1b1c 100%);
}
.nav-icon { width: 16px; height: 16px; margin-right: 16px; flex: none; }
.omnibox {
  width: 1631px;
  height: 30px;
  margin-left: -2px;
  border-radius: 15px;
  background: #202124;
  display: flex;
  align-items: center;
  padding-left: 13px;
}
.lock { width: 11px; height: 13px; margin-right: 11px; flex: none; }
.url { font: 14.100px "Roboto", sans-serif; color: #9aa0a6; flex: 1; }
.url b { font-weight: 400; color: #e8eaed; }
.omni-icon { width: 15px; height: 15px; margin-right: 17px; flex: none; }
.omni-icon:last-child { margin-right: 9px; }
.side-icon {
  width: 14px;
  height: 15px;
  margin-left: 16px;
  border: 2px solid #fff;
  border-right-width: 6px;
  flex: none;
}
.avatar { width: 22px; height: 22px; margin-left: 14px; flex: none; }
.kebab { margin-left: 20px; display: flex; flex-direction: column; gap: 2px; flex: none; }
.kebab i { width: 3px; height: 3px; border-radius: 50%; background: #e8e8e8; display: block; }

/* roboflow app */
.app { flex: 1; display: flex; flex-direction: column; min-height: 0; }
.app-head {
  height: 57px;
  flex: none;
  display: flex;
  align-items: center;
  position: relative;
  background: linear-gradient(180deg, #43008a, #6c10cf);
  padding-left: 20px;
}
.head-back { width: 20px; height: 20px; flex: none; }
.head-title { margin: 0 0 0 18px; font: 400 22.400px "Roboto", sans-serif; color: #fff; white-space: nowrap; }
.head-help {
  position: absolute;
  left: 350px;
  top: 14px;
  display: flex;
  align-items: center;
  gap: 4px;
  font: 500 11.800px/16px "Roboto", sans-serif;
  color: #fff;
}
.help-icon { width: 12px; height: 12px; }
.pager {
  position: absolute;
  left: 997px;
  top: 0;
  height: 57px;
  width: 146px;
  display: flex;
  align-items: center;
  justify-content: space-between;
}
.pager-arrow { width: 12px; height: 18px; }
.pager-text { font: 400 20px "Roboto", sans-serif; }
.head-eye { position: absolute; right: 25px; top: 16px; width: 26px; height: 26px; }

.app-body {
  flex: 1;
  display: flex;
  min-height: 0;
  background: #4e5059;
  padding-bottom: 5px;
}

.rail {
  width: 94px;
  flex: none;
  display: flex;
  flex-direction: column;
  background: #fff;
}
.rail-top { height: 35px; background: #15002b; border-bottom-right-radius: 7px; }
.rail-tab {
  height: 60px;
  display: flex;
  flex-direction: column;
  align-items: center;
  font: 600 12.800px/16px "Inter", sans-serif;
  color: #9a9aa2;
}
.rail-tab-active { color: #6b16c8; background: #fff; padding-top: 8px; }
.rail-icon { width: 20px; height: 24px; margin-bottom: 4px; display: block; }
.rail-rest { flex: 1; background: #15002b; border-top-right-radius: 7px; padding-top: 26px; }
.rail-icon-tags { width: 34px; height: 34px; margin-bottom: 1px; }

.panel { width: 310px; flex: none; display: flex; background: #fff; color: #374151; }
.panel-scroll { width: 295px; flex: none; overflow: hidden; }
.panel-title {
  height: 56px;
  margin: 0 5px;
  padding: 5px 0 0 15px;
  display: flex;
  align-items: center;
  border-bottom: 1px solid #e3e3ec;
  font-size: 16px;
  color: #3a3f4c;
}
.group-title { margin: 15px 0 0 20px; font: 700 16px/20px "Inter", sans-serif; color: #272b36; }
.tabs { margin: 14px 0 0 21px; display: flex; gap: 25px; }
.tabs-item { font: 600 12px/22px "Inter", sans-serif; color: #4b5563; height: 22px; }
.tabs-on { color: #8a2be2; border-bottom: 1.500px solid #5b0fb5; }
.classes { list-style: none; margin: 10px 0 0; padding: 0 20px; }
.classes li { height: 30px; display: flex; align-items: center; }
.dot { width: 10px; height: 10px; border-radius: 50%; flex: none; margin-right: 10px; }
.name { flex: 1; font-size: 16px; color: #374151; }
.count {
  height: 15px;
  padding: 0 10px;
  border-radius: 8px;
  background: #e0e3e8;
  font: 13px/15px "Inter", sans-serif;
  color: #4b5563;
}
.teal { background: #50f5d0; }
.blue { background: #2a00f5; }
.lime { background: #c0ee20; }
.purple { background: #7f20ee; }
.sky { background: #38b6ec; }
.yellow { background: #f8f820; }
.crimson { background: #f0104f; }
.orange { background: #fb7e12; }
.azure { background: #3478f6; }
.pink { background: #f9a8a8; }
.grey { background: #c8c8c8; }
.magenta { background: #f810e8; }
.unused { margin: 15px 0 0 20px; font: 16px/20px "Inter", sans-serif; color: #a0a3ab; }
.unused-item { margin: 10px 0 0 20px; font: 16px/20px "Inter", sans-serif; color: #374151; }

.scrollbar { width: 15px; flex: none; position: relative; background: #f1f1f1; }
.sb-thumb { position: absolute; left: 2px; top: 15px; width: 11px; height: 400px; background: #c1c1c1; }
.sb-up, .sb-down { position: absolute; left: 3px; width: 0; height: 0; border: 4px solid transparent; }
.sb-up { top: 4px; border-top: 0; border-bottom: 5px solid #a0a0a0; }
.sb-down { bottom: 5px; border-bottom: 0; border-top: 5px solid #505050; }

/* canvas */
.canvas { flex: 1; position: relative; }
.shortcuts {
  position: absolute;
  left: 30px;
  top: 0;
  width: 199px;
  height: 35px;
  border: 0;
  border-radius: 0 0 6px 6px;
  background: #7c1ae8;
  box-shadow: 0 2px 4px rgba(0,0,0,.2);
  color: #fff;
  font: 600 12px "Inter", sans-serif;
  letter-spacing: .55px;
}
.photo {
  position: absolute;
  left: 114px;
  top: 155px;
  display: block;
  background: #414141;
}
.glyphs { font: 64px "Open Sans", sans-serif; fill: #050505; text-anchor: middle; filter: blur(.5px); }
.glyphs-bold { font-weight: 700; font-size: 66px; }
.boxes rect { fill: none; stroke-width: 1.500; }
.ol { stroke: #6d7228; }
.cr { stroke: #7c2548; }
.te { stroke: #2f7a6e; }
.nv { stroke: #2d2a78; }
.in { stroke: #24188a; }
.ye { stroke: #78782a; }
.pu { stroke: #7e2a8a; }
.vi { stroke: #5e2c80; }
.bl { stroke: #2f5484; }
.tb { stroke: #2b6a7c; }
.gy { stroke: #6e6e6e; }
.or { stroke: #80562a; }
.br { stroke: #75605f; }
.selected { fill: #fff; stroke: #38b6ec; stroke-width: 2px; }
.selected-tag { fill: #2a2a6a; }
.selected-label { font: 700 14px "DejaVu Sans", sans-serif; fill: #fff; text-anchor: middle; }

.zoombar { position: absolute; left: 10px; top: 878px; display: flex; gap: 5px; height: 32px; }
.zoom-pill, .zoom-reset {
  border: 1px solid #858890;
  border-radius: 16px;
  display: flex;
  align-items: center;
  font: 600 12px "Inter", sans-serif;
  letter-spacing: .5px;
  color: #fff;
}
.zoom-pill { width: 149px; padding: 0 10px; }
.zoom-reset { width: 59px; justify-content: center; }
.zoom-round { width: 15px; height: 15px; flex: none; }
.zoom-val { margin-left: 19px; width: 35px; }
.zoom-lock { width: 18px; height: 18px; margin: 0 16px 0 8px; flex: none; }

.tools {
  position: absolute;
  left: 1380px;
  top: 246px;
  width: 48px;
  height: 429px;
  padding: 10px 0 0;
  border-radius: 13px;
  background: #fff;
  box-shadow: 0 2px 6px rgba(0,0,0,.15);
}
.tool { height: 37.500px; display: flex; align-items: center; justify-content: center; }
.tool svg { width: 18px; height: 18px; display: block; }
.tool-on span {
  width: 32px;
  height: 32px;
  margin-top: -2px;
  border-radius: 8px;
  background: #8b3ff0;
  border: 2px solid #4a0e8f;
  display: flex;
  align-items: center;
  justify-content: center;
}
.tool-sep { margin: 11px 8px 12px 14px; border: 0; height: 1px; background: #cfcfcf; width: 20px; }
```
